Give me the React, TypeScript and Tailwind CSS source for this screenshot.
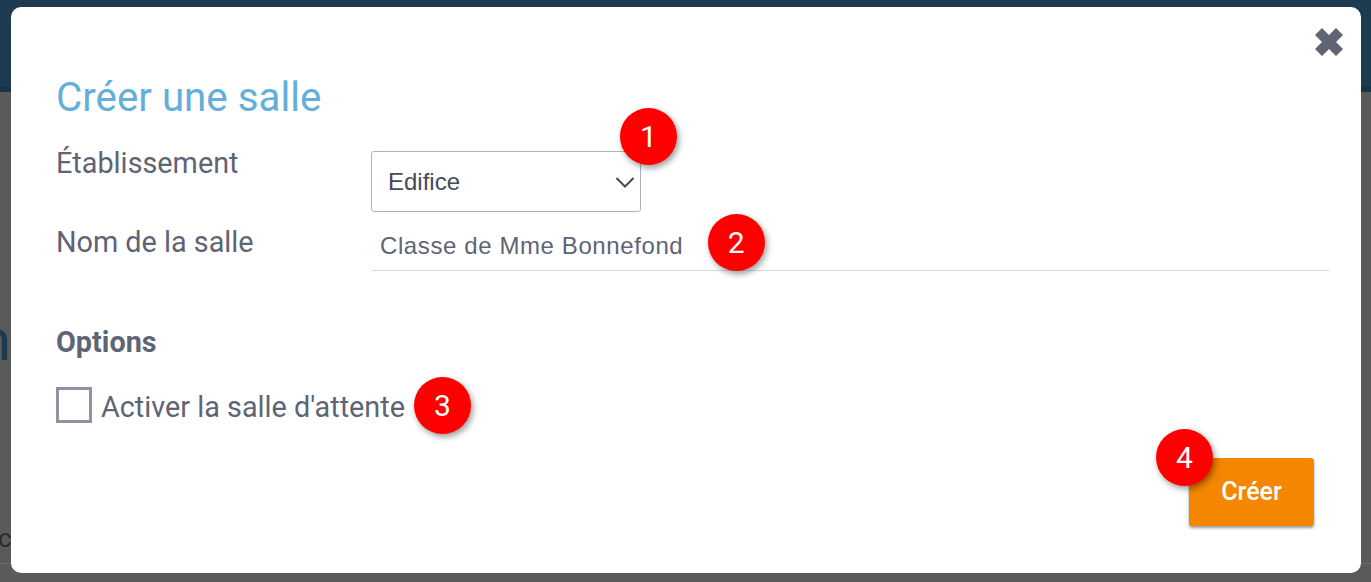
const ROBOTO = "font-['Roboto',sans-serif]";
const FIELD = "font-['Liberation_Sans',sans-serif] text-[24px]";

function Badge({ n, className }: { n: number; className: string }) {
  return (
    <span
      className={`absolute flex h-[57px] w-[57px] items-center justify-center rounded-full bg-[#ff0000] text-[30px] text-white shadow-[2px_3px_6px_rgba(0,0,0,0.4)] ${ROBOTO} ${className}`}
    >
      {n}
    </span>
  );
}

export default function App() {
  return (
    <div className="relative h-[582px] w-full overflow-hidden bg-[#5a5a5a]">
      {/* page behind the dimmed overlay */}
      <div className="h-[86px] bg-[#1d3b50]" />
      <div className="h-[6px] bg-[#1b3444]" />
      <div className="mt-[471px] h-px bg-[#6b6b6b]" />
      <span className={`absolute left-[-21px] top-[306px] text-[58px] leading-[68px] text-[#1d3b50] ${ROBOTO}`}>n</span>
      <span className={`absolute left-[-2px] top-[523px] text-[26px] leading-[30px] text-[#2b2b2b] ${ROBOTO}`}>c</span>

      {/* modal */}
      <div className="absolute left-[11px] top-[7px] h-[566px] w-[1350px] rounded-[10px] bg-white pl-[45px] pr-[32px] pt-[67px]">
        <svg className="absolute right-[17px] top-[20px] h-[30px] w-[30px]" viewBox="0 0 30 30" fill="#5f6475">
          <path d="M8 1 15 8 22 1 29 8 22 15 29 22 22 29 15 22 8 29 1 22 8 15 1 8Z" />
        </svg>

        <h1 className={`text-[40.3px] leading-[48px] text-[#63afd9] ${ROBOTO}`}>Créer une salle</h1>

        <div className="mt-[23px] flex">
          <label className={`w-[315px] shrink-0 text-[28.8px] leading-[36px] text-[#5f6475] ${ROBOTO}`}>Établissement</label>
          <div className={`relative mt-[6px] flex h-[61px] w-[270px] items-center justify-between rounded-[3px] border border-[#b0b2bb] pl-[16px] pr-[5px] text-[#454a58] ${FIELD}`}>
            Edifice
            <svg className="h-[20px] w-[20px]" viewBox="0 0 20 20" fill="none" stroke="#454a58" strokeWidth="2">
              <path d="M1.5 6 10 14.5 18.5 6" />
            </svg>
            <Badge n={1} className="right-[-37px] top-[-44px]" />
          </div>
        </div>

        <div className="mt-[12px] flex">
          <label className={`w-[315px] shrink-0 text-[28.8px] leading-[36px] text-[#5f6475] ${ROBOTO}`}>Nom de la salle</label>
          <div className={`relative h-[47px] flex-1 border-b border-[#d9d9e0] pl-[9px] leading-[44px] tracking-wide text-[#5f6475] ${FIELD}`}>
            Classe de Mme Bonnefond
            <Badge n={2} className="left-[337px] top-[-10px]" />
          </div>
        </div>

        <h2 className={`mt-[55px] text-[28.8px] font-bold leading-[32px] text-[#5f6475] ${ROBOTO}`}>Options</h2>

        <div className="relative mt-[29px] flex w-fit items-start">
          <span className="h-[36px] w-[36px] border-[3px] border-[#8f93a1]" />
          <span className={`ml-[9px] pt-[2px] text-[28.8px] leading-[36px] text-[#5f6475] ${ROBOTO}`}>Activer la salle d'attente</span>
          <Badge n={3} className="right-[-66px] top-[-10px]" />
        </div>

        <div className="absolute bottom-[47px] right-[47px]">
          <button className={`h-[68px] w-[125px] rounded-[3px] bg-[#f48600] text-[25px] font-medium text-white shadow-[0_2px_3px_rgba(0,0,0,0.4)] ${ROBOTO}`}>
            Créer
          </button>
          <Badge n={4} className="left-[-33px] top-[-29px]" />
        </div>
      </div>
    </div>
  );
}
